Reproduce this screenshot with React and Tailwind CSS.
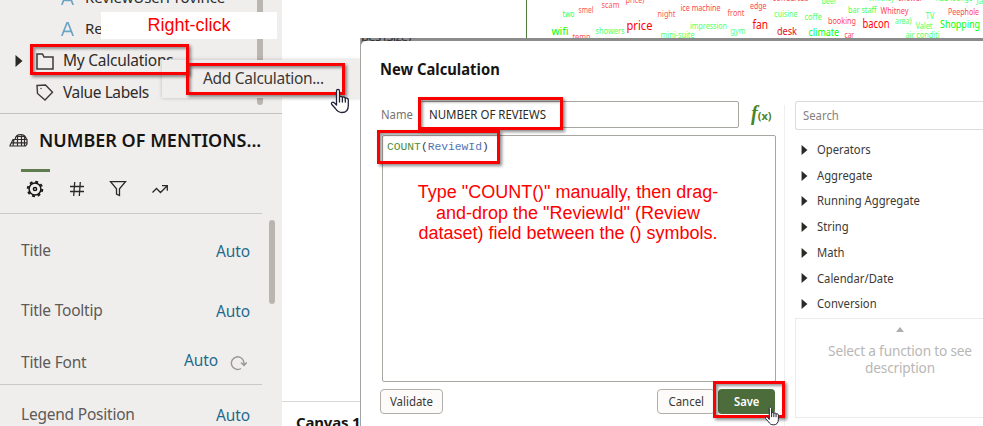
import React from "react";

const words = [
  ["two", 562, 17, 12, 8.5, "#3f5"], ["smel", 578, 13, 15, 8.5, "#f55"], ["scam", 601, 8, 18, 8.5, "#f55"],
  ["price)", 625, 3, 19, 8.5, "#f55"], ["wifi", 551, 34.5, 17, 11.5, "#0f0"], ["temp", 572, 39.5, 18, 8.5, "#f55"],
  ["showers", 595, 33.5, 29, 8.5, "#5f6"], ["price", 626, 29.5, 26, 12, "#f00"], ["mini-suite", 660, 38, 34, 8.5, "#5f6"],
  ["night", 657, 17, 18, 8.5, "#f55"], ["ice machine", 680, 10.5, 40, 8.5, "#f45"], ["impression", 689.5, 29, 37, 8.5, "#5f6"],
  ["front", 727, 16, 17, 8.5, "#f55"], ["gym", 730, 34, 15, 8.5, "#5f6"], ["edge", 749.5, 9, 16.5, 8.5, "#f45"],
  ["fan", 752, 28.5, 15.5, 12, "#f00"], ["cuisine", 773.5, 17, 23.5, 8.5, "#5f6"], ["coffe", 804, 19.5, 17.5, 8.5, "#5f6"],
  ["bar staff", 847.5, 13, 28.5, 8.5, "#4f5"], ["Whitney", 880, 13.5, 28, 8.5, "#f45"], ["TV", 925, 18.5, 9, 8.5, "#5f6"],
  ["Peephole", 947.5, 14.5, 31, 8.5, "#f45"], ["booking", 827.5, 23.5, 28, 8.5, "#f45"], ["bacon", 862, 27.5, 27, 12, "#f00"],
  ["area)", 894.5, 23.5, 16.5, 8.5, "#5f6"], ["Valet", 915, 28.5, 17, 8.5, "#5f6"], ["Shopping", 939.5, 28, 40, 11, "#0f0"],
  ["desk", 776.5, 34.5, 20, 11, "#e01020"], ["climate", 808, 35.5, 30.5, 11, "#0f0"], ["car", 844, 37.5, 9.5, 8.5, "#f45"],
  ["air conditi", 905, 37.5, 34, 8.5, "#5f6"], ["coffee/tea", 772, 1, 36, 8.5, "#f45"], ["beer", 821, 3.5, 15, 8.5, "#5f6"],
  ["Whitney", 868, 1, 26, 8.5, "#5f6"], ["shower", 898, 1, 24, 8.5, "#f45"], ["F&B lounge", 935, 1, 37, 8.5, "#4f5"],
  ["Ja", 976, 4, 7, 8.5, "#5f6"],
];

function WordCloud() {
  return (
    <svg className="block h-[38px] w-[456px]" viewBox="527 0 456 38" fontFamily="'Noto Sans', sans-serif">
      {words.map(([t, x, y, w, s, c], i) => (
        <text key={i} x={x + 0.5} y={y} textLength={w} lengthAdjust="spacingAndGlyphs" fontSize={s} fill={c}>{t}</text>
      ))}
    </svg>
  );
}

function Hand({ className }) {
  return (
    <svg className={className} width="20" height="26" viewBox="0 0 20 26" fill="#fff" stroke="#222236" strokeWidth="1.3" strokeLinejoin="round" strokeLinecap="round">
      <path d="M6.500 17V3.200C6.500.8 9.500.8 9.500 3.200V9.500C9.500 8 12.400 8 12.400 9.800C12.400 8.500 15.300 8.700 15.300 10.600C15.300 9.500 18.300 9.800 18.300 11.800V17.500C18.300 22 16 24.500 12 24.500C8.500 24.500 7 23 5.400 20.500L1.800 16.500C.6 14.700 2.700 13.400 4.200 14.800Z" />
      <path d="M9.500 9.500v4.500M12.400 9.800V14M15.300 10.600V14" fill="none" />
    </svg>
  );
}

function Caret({ className }) {
  return (
    <svg className={className} width="8" height="12" viewBox="0 0 8 12" fill="#2b2926"><path d="M0.500 0 7.500 6 0.500 12Z" /></svg>
  );
}

const LetterA = () => (
  <svg className="ml-[61px] w-[13px] shrink-0" height="14" viewBox="0 0 13 14" fill="none" stroke="#6ba5c4" strokeWidth="1.700"><path d="M.8 14 6 .8h1L12.200 14M2.800 9.300h7.400" /></svg>
);

function Tree() {
  return (
    <div className="flex h-[114px] flex-col overflow-hidden border-b border-[#c4c2c0] text-[16px] text-[#2e2c2a]">
      <div className="-mt-[18px] flex h-[31px] shrink-0 items-center"><LetterA /><span className="ml-[11px] text-[15px] tracking-[-0.1px]">ReviewUserProvince</span></div>
      <div className="flex h-[31px] shrink-0 items-center"><LetterA /><span className="ml-[11px] text-[15px]">Re</span></div>
      <div className="mt-px flex h-[32px] shrink-0 items-center">
        <Caret className="ml-[15px] shrink-0" />
        <svg className="ml-[13px] shrink-0" width="18" height="17" viewBox="0 0 18 17" fill="none" stroke="#3d3a37" strokeWidth="1.500"><path d="M1 1h5.500l1.500 3h9v12H1Z" /></svg>
        <span className="ml-[9px] text-[15.5px] tracking-[-0.25px]">My Calculations</span>
      </div>
      <div className="flex h-[32px] shrink-0 items-center">
        <svg className="ml-[36px] -mt-[2px] shrink-0" width="18" height="17" viewBox="0 0 18 17" fill="none" stroke="#3d3a37" strokeWidth="1.400"><path d="M1 1.500 9.500 1 16.500 8.200 9 16 1.500 9.500Z" /><circle cx="5" cy="4.500" r=".7" fill="#3d3a37" stroke="none" /></svg>
        <span className="ml-[9px] text-[15.5px] tracking-[-0.4px]">Value Labels</span>
      </div>
    </div>
  );
}

function TabIcons() {
  return (
    <div className="flex h-[42px] w-[262px] items-start gap-[24px] border-b border-[#cbc9c7] pl-[26px] pt-[8px] text-[#2b2926]">
      <svg width="18" height="18" viewBox="0 0 18 18" fill="none" stroke="#161513" strokeWidth="1.500">
        <circle cx="9" cy="9" r="5.900" /><circle cx="9" cy="9" r="1.600" />
        <circle cx="9" cy="9" r="7.300" strokeWidth="1.900" strokeDasharray="2.870 2.870" />
      </svg>
      <svg width="18" height="18" viewBox="0 0 18 18" fill="none" stroke="currentColor" strokeWidth="1.300"><path d="M6.700 2 5.700 16M12.300 2l-1 14M2 6.500h14M2 11.500h14" /></svg>
      <svg className="-ml-px" width="18" height="18" viewBox="0 0 18 18" fill="none" stroke="currentColor" strokeWidth="1.300"><path d="M1.500 1.600h15L10.500 8.800v6.700L7.500 14V8.800Z" /></svg>
      <svg width="18" height="18" viewBox="0 0 18 18" fill="none" stroke="currentColor" strokeWidth="1.300"><path d="M1.500 12.500 5.500 8.500l4 4L16 6M11 5.700h5.300v5" /></svg>
    </div>
  );
}

function Property({ label, className, reset }) {
  return (
    <div className={"flex w-[250px] items-center justify-between pl-[21px] text-[15.5px] " + className}>
      <span className="tracking-[-0.22px] text-[#5d5a57]">{label}</span>
      {reset ? (
        <span className="-mt-[4px] flex items-center gap-[12px] pr-[3px] tracking-[-0.1px]">
          <span className="text-[#1f6a8c]">Auto</span>
          <svg className="mt-[3px]" width="17" height="16" viewBox="0 0 17 16" fill="none" stroke="#999693" strokeWidth="1.400"><path d="M11 13.500A6.300 6.300 0 1 1 14 8v2M11 7.500l3 3 2.700-3" /></svg>
        </span>
      ) : (
        <span className="pt-[1px] tracking-[-0.1px] text-[#1f6a8c]">Auto</span>
      )}
    </div>
  );
}

const groups = ["Operators", "Aggregate", "Running Aggregate", "String", "Math", "Calendar/Date", "Conversion"];

const button = "flex h-[25px] shrink-0 items-center justify-center rounded-[4px] ";

function Dialog() {
  return (
    <section className="absolute left-[360px] top-[38px] flex h-[388px] w-[623px] flex-col border-l border-[#a5a3a2] bg-[#8b8b8b] text-[#3b3936]">
      <div className="h-[3px] shrink-0 overflow-hidden text-[13px] text-[#333]"><span className="-mt-[9px] block leading-[15px] tracking-[-0.7px]">pes (Size)</span></div>
      <div className="flex grow flex-col rounded-tl-[5px] bg-white pt-[16px]">
        <h1 className="ml-[19px] h-[24px] origin-left scale-x-[0.922] text-[16px] font-bold leading-[24px] text-[#161513]">New Calculation</h1>
        <div className="mt-[20px] flex grow">
          <div className="w-[415px] shrink-0 pl-[20px]">
            <div className="flex h-[27px] items-center text-[13px]">
              <span className="w-[39px] shrink-0 origin-left scale-x-[0.87] text-[#77736f]">Name</span>
              <div className="flex h-[27px] w-[319px] shrink-0 items-center rounded-[2px] border border-[#a9a5a0] pl-[8px] text-[#2c2a28]"><span className="origin-left scale-x-[0.882]">NUMBER OF REVIEWS</span></div>
              <span className="ml-[12px] shrink-0 whitespace-nowrap font-[Liberation_Serif] text-[20px] font-bold italic leading-[20px] text-[#4a8428]">f<span className="inline-block font-['Noto_Sans'] text-[11px] not-italic">(x)</span></span>
            </div>
            <div className="ml-[1px] mt-[7px] h-[247px] w-[394px] rounded-[2px] border border-[#a9a5a0] pl-[4px] pt-[4px] font-[Liberation_Mono] text-[11.3px] leading-[15px]">
              <span className="text-[#4f8f3b]">COUNT</span>(<span className="text-[#5272b4]">ReviewId</span>)
            </div>
            <div className="mt-[7px] flex h-[25px] text-[13px]">
              <div className={button + "-ml-[1px] w-[63px] border border-[#b2afa9] bg-[#fcfbfa]"}><span className="scale-x-[0.88]">Validate</span></div>
              <div className={button + "ml-[214px] w-[58px] border border-[#b2afa9] bg-[#fcfbfa]"}><span className="scale-x-[0.88]">Cancel</span></div>
              <div className={button + "ml-[3px] w-[57px] bg-[#4d6c3b] font-semibold text-white"}><span className="scale-x-[0.86]">Save</span></div>
            </div>
          </div>
          <div className="mt-[4px] w-[9px] shrink-0 border-r border-[#efefef]" />
          <div className="ml-[10px] flex w-[188px] shrink-0 flex-col">
            <div className="flex h-[29px] shrink-0 items-center rounded-l-[3px] border border-r-0 border-[#dedcda] pl-[7px] text-[13px] text-[#85817d]"><span className="origin-left scale-x-[0.87]">Search</span></div>
            <ul className="mt-[7px]">
              {groups.map((g) => (
                <li key={g} className="flex h-[25.7px] items-center text-[13px]"><Caret className="ml-[6px] h-[10px] w-[7px]" /><span className="ml-[9px] origin-left scale-x-[0.865]">{g}</span></li>
              ))}
            </ul>
            <div className="mt-[1px] flex h-[100px] flex-col items-center border border-r-0 border-[#ebebeb] text-center text-[15px] leading-[17.5px] text-[#b9b7b5]">
              <svg className="ml-[20px] mt-[8px]" width="8" height="5" viewBox="0 0 8 5" fill="#b0aeac"><path d="M4 0 8 5H0Z" /></svg>
              <p className="ml-[20px] mt-[10px] w-[162px] scale-x-[0.91] tracking-[-0.2px]">Select a function to see description</p>
            </div>
          </div>
        </div>
      </div>
    </section>
  );
}

const box = "absolute border-[3px] border-[#fb0000] shadow-[2px_2px_3px_rgba(0,0,0,0.45),inset_2px_2px_3px_rgba(0,0,0,0.4)] ";

export default function App() {
  return (
    <main className="relative flex h-[426px] w-[983px] overflow-hidden bg-white font-['Noto_Sans',sans-serif]">
      <aside className="h-[426px] w-[282px] shrink-0 bg-[#f0eeed]">
        <Tree />
        <div className="flex h-[55px] items-center pb-[2px] pl-[9px]">
          <svg className="shrink-0" width="20" height="15" viewBox="0 0 20 15" fill="none" stroke="#302e2b" strokeWidth="1.200"><path d="M1 12.500 4 6.500H18v4.500l-1.500 2H1ZM6 6.500C7 0 16 0 17.500 6.500M8.500 13V3M12.500 13V1.500M15.500 13V3M8 3.500h8M2.500 9.800H18M5 6.500 4 13" /></svg>
          <span className="ml-[10px] whitespace-nowrap text-[18px] font-semibold text-[#161513]">NUMBER OF MENTIONS...</span>
        </div>
        <div className="ml-[21px] h-[3px] w-[29px] bg-[#5f7d4f]" />
        <TabIcons />
        <Property label="Title" className="mt-[22px] h-[30px]" />
        <Property label="Title Tooltip" className="mt-[30px] h-[30px]" />
        <Property label="Title Font" className="mt-[22px] h-[30px]" reset />
        <div className="mt-[6px] w-[262px] border-t border-[#cbc9c7]" />
        <Property label="Legend Position" className="mt-[15px] h-[30px]" />
      </aside>

      <section className="flex grow flex-col">
        <div className="ml-[244px] h-[38px] shrink-0 border-l border-[#4f7a3c]"><WordCloud /></div>
        <div className="mt-[363px] h-[30px] w-[78px] shrink-0 whitespace-nowrap border-t border-[#d8d6d4] pl-[14px] pt-[10px] text-[15px] font-bold leading-[20px] tracking-[-0.2px] text-[#161513]">Canvas 1</div>
      </section>

      <div className="absolute left-[257px] top-0 h-[105px] w-[6px] rounded-b-[3px] bg-[#bbb5b0]" />
      <div className="absolute left-[269px] top-[220px] h-[84px] w-[6px] rounded-[3px] bg-[#bbb5b0]" />
      <div className="absolute left-[101px] top-[12px] flex h-[27px] w-[176px] items-center justify-center bg-white font-['Liberation_Sans'] text-[18px] text-[#f00]">Right-click</div>
      <div className="absolute left-[162px] top-[60px] flex h-[38px] w-[199px] items-center bg-[#f0eeed] pl-[41px] text-[15.5px] tracking-[-0.3px] text-[#3b3936] shadow-[0_0_4px_rgba(0,0,0,0.2)]">Add Calculation...</div>
      <Dialog />
      <div className={box + "left-[30px] top-[44px] h-[31px] w-[159px]"} />
      <div className={box + "left-[186px] top-[63px] h-[32px] w-[159px]"} />
      <div className={box + "left-[418px] top-[97px] h-[33px] w-[145px]"} />
      <div className={box + "left-[377px] top-[130px] h-[34px] w-[123px]"} />
      <div className={box + "left-[713px] top-[381px] h-[37px] w-[72px]"} />
      <p className="absolute left-[398px] top-[182px] w-[340px] text-center font-['Liberation_Sans'] text-[18px] leading-[20.7px] text-[#f00]">
        Type "COUNT()" manually, then drag-<br />and-drop the "ReviewId" (Review<br />dataset) field between the () symbols.
      </p>
      <Hand className="absolute left-[330px] top-[88px]" />
      <Hand className="absolute left-[764px] top-[406px] h-[20px] w-[16px]" />
    </main>
  );
}
